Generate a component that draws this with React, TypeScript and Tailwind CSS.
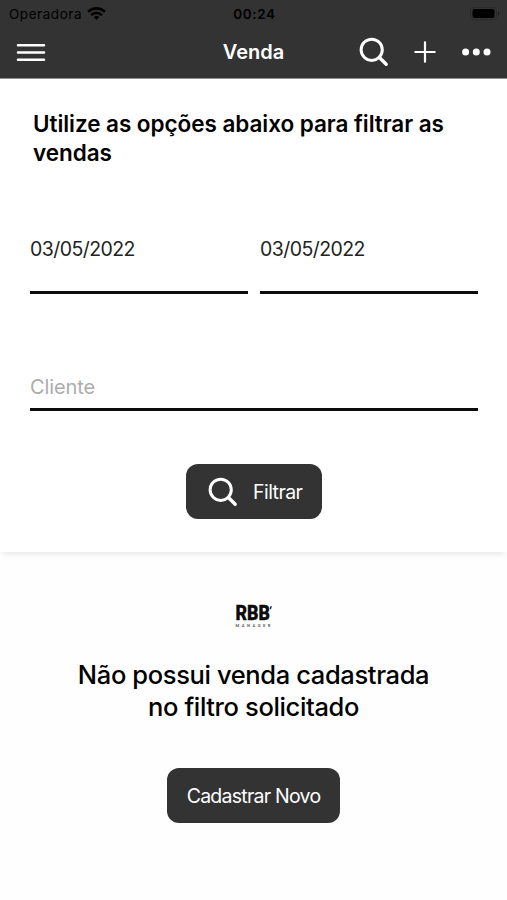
import React, { useState } from 'react';

const SearchIcon = () => (
  <svg className="w-[30px] h-[30px] shrink-0" viewBox="0 0 30 30" fill="none" stroke="currentColor" strokeLinecap="round">
    <circle cx="12.7" cy="12.8" r="10.6" strokeWidth="3" />
    <path d="M20.4 20.5L27.2 27.3" strokeWidth="3.4" />
  </svg>
);

const Logo = () => (
  <svg className="w-[40px] h-[25px] overflow-visible" viewBox="0 0 40 25" fontFamily="Roboto, sans-serif">
    <text x="1.5" y="16.3" fontSize="19.5" fontWeight="900" fill="#0c0c0c" stroke="#0c0c0c" strokeWidth="0.3" textLength="34.5" lengthAdjust="spacingAndGlyphs">
      RBB
    </text>
    <path d="M36.2 2.2h1.8l-1 3h-1.3z" fill="#333333" />
    <text x="1.5" y="22.8" fontSize="4.2" fontWeight="700" fill="#666666" textLength="35">
      MANAGER
    </text>
  </svg>
);

const StatusBar = () => (
  <div className="flex h-[27px] items-center justify-between pl-[9px] pr-[7px] text-black text-[13.5px] leading-4">
    <div className="flex flex-1 items-center gap-[5px]">
      <span className="tracking-[0.55px]">Operadora</span>
      <svg className="w-[19px] h-[14px]" viewBox="0 0 19 14" fill="none" stroke="currentColor" strokeWidth="2.6">
        <path d="M1.1 4.8a12 12 0 0 1 16.8 0" />
        <path d="M4.1 8.1a7.7 7.7 0 0 1 10.8 0" />
        <path d="M9.5 13.1l-2.8-2.8a4 4 0 0 1 5.6 0z" fill="currentColor" stroke="none" />
      </svg>
    </div>
    <span className="font-semibold tracking-[0.6px]">00:24</span>
    <div className="flex flex-1 justify-end">
      <svg className="w-[30px] h-[14px]" viewBox="0 0 30 14">
        <rect x="0.5" y="0.3" width="26" height="12.4" rx="3.5" fill="none" stroke="#2a2a2a" />
        <rect x="2.5" y="2" width="22" height="9" rx="2" fill="#000" />
        <path d="M28 4.5v4c1.6-.6 1.6-3.4 0-4z" fill="#1c1c1c" />
      </svg>
    </div>
  </div>
);

const NavBar = () => (
  <div className="flex h-[50px] items-center justify-between pl-4 pr-[16px] text-white">
    <button className="flex flex-1" aria-label="Menu">
      <svg className="w-[30px] h-[20px]" viewBox="0 0 30 20" stroke="currentColor" strokeWidth="2.5" strokeLinecap="round">
        <path d="M2 3.3h26M2 10.5h26M2 17.8h26" />
      </svg>
    </button>
    <h1 className="text-[20px] font-semibold leading-6">Venda</h1>
    <div className="flex flex-1 items-center justify-end">
      <button aria-label="Buscar">
        <SearchIcon />
      </button>
      <button className="ml-[25px]" aria-label="Adicionar">
        <svg className="w-[22px] h-[22px]" viewBox="0 0 22 22" stroke="currentColor" strokeWidth="2.2" strokeLinecap="round">
          <path d="M11 1.3v19.4M1.3 11h19.4" />
        </svg>
      </button>
      <button className="ml-[25px]" aria-label="Mais">
        <svg className="w-[30px] h-[8px]" viewBox="0 0 30 8" fill="currentColor">
          <circle cx="4.6" cy="4" r="3.5" />
          <circle cx="15.3" cy="4" r="3.5" />
          <circle cx="26" cy="4" r="3.5" />
        </svg>
      </button>
    </div>
  </div>
);

const DateField = ({ value }: { value: string }) => (
  <button className="h-[60px] flex-1 border-b-[3px] border-[#0c0c0c] pb-[27px] text-left text-[19.5px] leading-[30px] tracking-[-0.57px] text-[#222222]">
    {value}
  </button>
);

function App() {
  const [client, setClient] = useState('');

  return (
    <div className="flex h-[900px] w-[507px] flex-col bg-[#fefefe] font-['Inter',sans-serif] text-black">
      <header className="h-[79px] border-b border-[#8c8c8c] bg-[#333333]">
        <StatusBar />
        <NavBar />
      </header>

      <section className="flex h-[473px] flex-col bg-white pl-[30px] pr-[29px] shadow-[0_6px_5px_-3px_rgba(0,0,0,0.08)]">
        <h2 className="ml-[3px] mt-[30px] text-[22.5px] font-semibold leading-[29px] tracking-[-0.05px]">
          Utilize as opções abaixo para filtrar as vendas
        </h2>
        <div className="mt-[67px] flex gap-3">
          <DateField value="03/05/2022" />
          <DateField value="03/05/2022" />
        </div>
        <input
          className="mt-[76px] h-[41px] border-b-[3px] border-[#0c0c0c] pb-[4px] text-[20px] tracking-[-0.1px] outline-none placeholder:text-[#acacac]"
          placeholder="Cliente"
          value={client}
          onChange={(e) => setClient(e.target.value)}
        />
        <button className="mt-[53px] flex h-[55px] w-[136px] items-center self-center rounded-xl bg-[#333333] pl-[21.5px] text-[19.5px] tracking-[-0.55px] text-white">
          <SearchIcon />
          <span className="ml-[15.5px] pt-[2px]">Filtrar</span>
        </button>
      </section>

      <section className="flex flex-col items-center">
        <div className="mt-[52px]">
          <Logo />
        </div>
        <p className="mt-[30px] w-[380px] text-center text-[25.5px] font-medium leading-8 tracking-[-0.37px]">
          Não possui venda cadastrada no filtro solicitado
        </p>
        <button className="mt-[45px] h-[55px] w-[173px] rounded-xl bg-[#333333] pt-[2px] text-[19.5px] tracking-[-0.75px] text-white">
          Cadastrar Novo
        </button>
      </section>
    </div>
  );
}

export default App;
